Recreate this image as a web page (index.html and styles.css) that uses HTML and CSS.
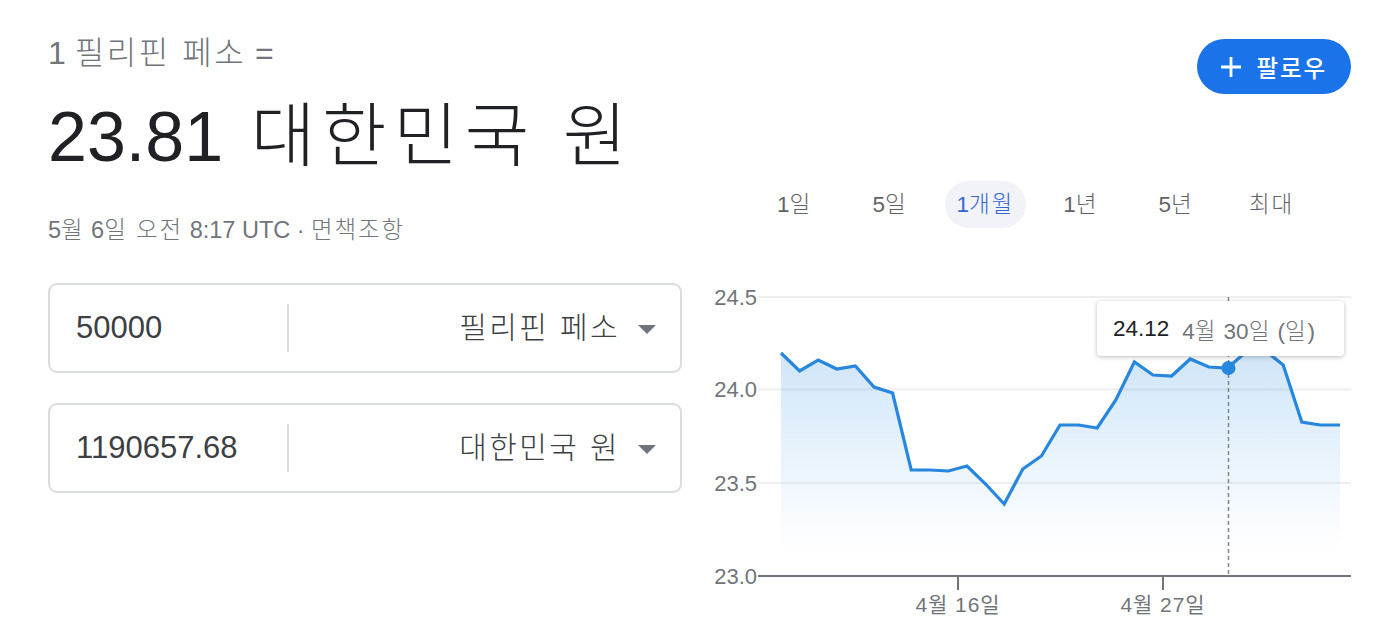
FILE: index.html
```html
<!DOCTYPE html>
<html lang="ko">
<head>
<meta charset="utf-8">
<title>필리핀 페소 → 대한민국 원</title>
<link rel="stylesheet" href="styles.css">
</head>
<body>
<div class="page">
  <section class="left">
    <div class="pair-title">1 <span class="ko">필리핀 페소</span> =</div>
    <div class="rate">23.81 <span class="ko">대한민국 원</span></div>
    <div class="stamp">5<span class="ko">월</span> 6<span class="ko">일 오전</span> 8:17 UTC · <span class="ko">면책조항</span></div>

    <div class="converter">
      <div class="amount">50000</div>
      <div class="divider"></div>
      <div class="currency"><span class="cur-name ko">필리핀 페소</span><span class="caret"></span></div>
    </div>
    <div class="converter">
      <div class="amount">1190657.68</div>
      <div class="divider"></div>
      <div class="currency"><span class="cur-name ko">대한민국 원</span><span class="caret"></span></div>
    </div>
  </section>

  <section class="right">
    <div class="follow-row">
      <button class="follow">
        <svg class="plus" width="22" height="22" viewBox="0 0 22 22"><path d="M11 1v20M1 11h20" stroke="#fff" stroke-width="2.8" fill="none"/></svg>
        <span class="ko">팔로우</span>
      </button>
    </div>

    <nav class="ranges">
      <span class="range">1<span class="ko">일</span></span>
      <span class="range">5<span class="ko">일</span></span>
      <span class="range active">1<span class="ko">개월</span></span>
      <span class="range">1<span class="ko">년</span></span>
      <span class="range">5<span class="ko">년</span></span>
      <span class="range"><span class="ko">최대</span></span>
    </nav>

    <div class="chart">
      <svg class="chart-svg" width="656" height="340" viewBox="700 280 656 340">
        <defs>
          <linearGradient id="area" gradientUnits="userSpaceOnUse" x1="0" y1="345" x2="0" y2="548">
            <stop offset="0" stop-color="#1e86e0" stop-opacity="0.22"/>
            <stop offset="1" stop-color="#1e86e0" stop-opacity="0"/>
          </linearGradient>
        </defs>
        <g class="grid">
          <line x1="758" y1="297" x2="1351" y2="297"/>
          <line x1="758" y1="389.5" x2="1351" y2="389.5"/>
          <line x1="758" y1="483" x2="1351" y2="483"/>
        </g>
        <g class="ylabels">
          <text x="757" y="297">24.5</text>
          <text x="757" y="389.5">24.0</text>
          <text x="757" y="483">23.5</text>
          <text x="757" y="576">23.0</text>
        </g>
        <polygon fill="url(#area)" points="781,353 799.6,371 818.2,360 836.8,369 855.4,366 874,387 892.6,393 911.2,470 929.8,470 948.4,471 967,466 985.6,484 1004.2,504 1022.8,469 1041.4,456 1060,425 1078.6,425 1097.2,428 1115.8,400 1134.4,362 1153,375 1171.6,376 1190.2,359 1208.8,367 1227.4,368 1246,352 1264.6,350 1283.2,365 1301.8,422 1320.4,425 1340,425 1340,548 781,548"/>
        <line class="cursor" x1="1228.5" y1="297" x2="1228.5" y2="575"/>
        <polyline class="series" points="781,353 799.6,371 818.2,360 836.8,369 855.4,366 874,387 892.6,393 911.2,470 929.8,470 948.4,471 967,466 985.6,484 1004.2,504 1022.8,469 1041.4,456 1060,425 1078.6,425 1097.2,428 1115.8,400 1134.4,362 1153,375 1171.6,376 1190.2,359 1208.8,367 1227.4,368 1246,352 1264.6,350 1283.2,365 1301.8,422 1320.4,425 1340,425"/>
        <circle class="dot" cx="1228.5" cy="368" r="7"/>
        <line class="axis" x1="758" y1="576" x2="1351" y2="576"/>
        <line class="tick" x1="958" y1="577" x2="958" y2="590"/>
        <line class="tick" x1="1163" y1="577" x2="1163" y2="590"/>
        <g class="xlabels">
          <text x="958" y="604">4월 16일</text>
          <text x="1163" y="604">4월 27일</text>
        </g>
      </svg>
      <div class="tooltip"><span class="tip-value">24.12</span><span class="tip-date">4<span class="ko">월</span> 30<span class="ko">일</span> (<span class="ko">일</span>)</span></div>
    </div>
  </section>
</div>
</body>
</html>
```

FILE: styles.css
```css
* { box-sizing: border-box; }

html, body {
  margin: 0;
  padding: 0;
  background: #ffffff;
}

body {
  font-family: "Liberation Sans", Arial, "Noto Sans CJK KR", sans-serif;
  color: #202124;
  width: 1396px;
  height: 644px;
  overflow: hidden;
}

/* Hangul set slightly looser and lighter to match the reference face */
.ko {
  letter-spacing: 0.08em;
  font-weight: 300;
}

.page {
  display: flex;
  padding-left: 48px;
}

/* ---------- left column ---------- */
.left {
  width: 634px;
  flex: none;
  padding-top: 33px;
}

.pair-title {
  font-size: 32px;
  line-height: 40px;
  color: #70757a;
  white-space: nowrap;
}

.rate {
  margin-top: 24px;
  font-size: 70px;
  line-height: 80px;
  color: #202124;
  white-space: nowrap;
}

.rate .ko {
  letter-spacing: 0.1em;
  margin-left: 8px;
}

.stamp {
  margin-top: 38px;
  font-size: 23.5px;
  line-height: 30px;
  color: #70757a;
  white-space: nowrap;
}

.converter {
  display: flex;
  align-items: center;
  height: 90px;
  border: 2px solid #dadce0;
  border-radius: 9px;
  padding: 0 24px 0 26px;
  margin-top: 38px;
}

.converter + .converter { margin-top: 30px; }

.amount {
  width: 211px;
  flex: none;
  font-size: 31px;
  line-height: 40px;
  color: #3c4043;
}

.divider {
  width: 2px;
  height: 48px;
  background: #dadce0;
  flex: none;
}

.currency {
  flex: 1;
  display: flex;
  justify-content: flex-end;
  align-items: center;
  font-size: 30px;
  line-height: 40px;
  color: #3c4043;
}

.caret {
  width: 0;
  height: 0;
  border-left: 9px solid transparent;
  border-right: 9px solid transparent;
  border-top: 9px solid #70757a;
  margin-left: 18px;
  margin-top: 2px;
}

/* ---------- right column ---------- */
.right {
  width: 651px;
  flex: none;
  margin-left: 18px;
  padding-top: 39px;
}

.follow-row {
  display: flex;
  justify-content: flex-end;
}

.follow {
  display: flex;
  align-items: center;
  height: 55px;
  padding: 0 24px 0 23px;
  border: none;
  border-radius: 28px;
  background: #1a73e8;
  color: #ffffff;
  font-family: "Liberation Sans", Arial, "Noto Sans CJK KR", sans-serif;
  font-size: 23.5px;
  gap: 15px;
}

.follow .ko { font-weight: 500; }

.plus { display: block; }

.ranges {
  display: flex;
  gap: 14.4px;
  margin-top: 87px;
  padding-left: 54px;
}

.range {
  width: 81px;
  height: 47px;
  line-height: 47px;
  text-align: center;
  font-size: 22.5px;
  color: #5f6368;
  border-radius: 24px;
  white-space: nowrap;
}

.range.active {
  background: #f1f3f8;
  color: #3367d6;
}

.chart {
  position: relative;
  margin-top: 52px;
  margin-left: -18px;
  width: 669px;
  height: 340px;
}

.chart-svg {
  display: block;
  margin-left: 18px;
  overflow: visible;
}

.grid line {
  stroke: #eeeeee;
  stroke-width: 2;
}

.ylabels text {
  font-family: "Liberation Sans", Arial, sans-serif;
  font-size: 22px;
  fill: #70757a;
  text-anchor: end;
  dominant-baseline: central;
}

.xlabels text {
  font-family: "Liberation Sans", Arial, "Noto Sans CJK KR", sans-serif;
  font-size: 21px;
  letter-spacing: 0.9px;
  fill: #70757a;
  text-anchor: middle;
  dominant-baseline: central;
}

.series {
  fill: none;
  stroke: #2786dd;
  stroke-width: 3.2;
  stroke-linejoin: miter;
}

.dot { fill: #2786dd; }

.cursor {
  stroke: #80868b;
  stroke-width: 1.5;
  stroke-dasharray: 4 3;
}

.axis {
  stroke: #70757a;
  stroke-width: 2.2;
}

.tick {
  stroke: #70757a;
  stroke-width: 2;
}

.tooltip {
  position: absolute;
  left: 415px;
  top: 21px;
  width: 247px;
  height: 55px;
  background: #ffffff;
  border-radius: 4px;
  box-shadow: 0 1px 4px rgba(60, 64, 67, 0.35);
  display: flex;
  align-items: center;
  padding-left: 16px;
  gap: 13px;
  font-size: 22.5px;
  white-space: nowrap;
}

.tip-value { color: #202124; }
.tip-date { color: #70757a; }
```
